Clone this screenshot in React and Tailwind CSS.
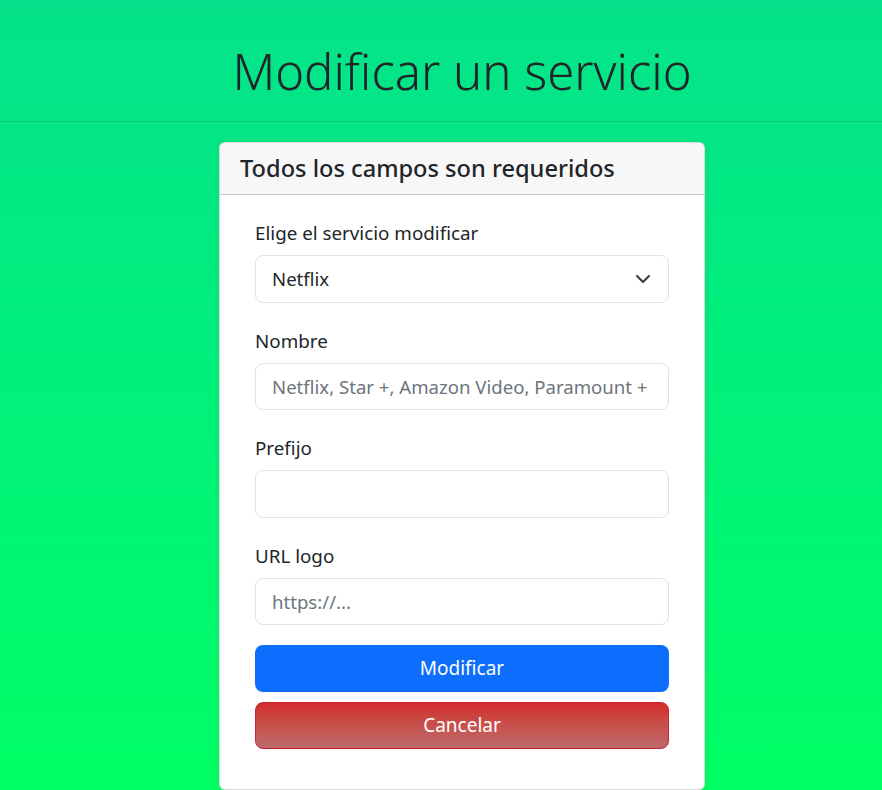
import React from 'react';

const Field = ({ label, children }) => (
    <div className="mb-6">
        <label className="block text-[18.8px] leading-7 mb-2 text-[#212529]">{label}</label>
        {children}
    </div>
);

const inputCls = "block w-full h-[47.5px] px-4 text-[18.6px] text-[#212529] bg-white border border-[#dee2e6] rounded-lg outline-none placeholder:text-[#6c757d]";

const App = () => {
    return (
        <div className="min-h-[790px] bg-gradient-to-b from-[#05e28b] to-[#00ff64] text-[#212529] font-['Noto_Sans',sans-serif]">
            <header className="h-[122px] border-b border-[#0cc778] flex items-center justify-center pl-[42px]">
                <h1 className="text-[49px] font-light leading-none pt-[22px] text-[#212529]">Modificar un servicio</h1>
            </header>

            <div className="flex justify-center pl-[42px] pt-5">
                <div className="w-[486px] bg-white border border-black/15 rounded-md shadow-[0_0_12px_rgba(0,0,0,0.05)] overflow-hidden">
                    <div className="bg-[#f7f7f7] border-b border-black/20 px-5 py-2">
                        <h2 className="text-[23.6px] leading-[35px] font-medium">Todos los campos son requeridos</h2>
                    </div>
                    <form className="px-[35px] pt-[24px] pb-[40px]" onSubmit={e => e.preventDefault()}>
                        <Field label="Elige el servicio modificar">
                            <div className="relative">
                                <select className={inputCls + " appearance-none pr-12"} defaultValue="netflix">
                                    <option value="netflix">Netflix</option>
                                    <option value="star">Star +</option>
                                    <option value="amazon">Amazon Video</option>
                                    <option value="paramount">Paramount +</option>
                                </select>
                                <svg className="absolute right-[18px] top-1/2 -translate-y-1/2 pointer-events-none" width="16" height="16" viewBox="0 0 16 16">
                                    <path fill="none" stroke="#343a40" strokeLinecap="round" strokeLinejoin="round" strokeWidth="2" d="m2 5 6 6 6-6" />
                                </svg>
                            </div>
                        </Field>
                        <Field label="Nombre">
                            <input className={inputCls} placeholder="Netflix, Star +, Amazon Video, Paramount +" />
                        </Field>
                        <Field label="Prefijo">
                            <input className={inputCls} />
                        </Field>
                        <div className="mb-5">
                            <label className="block text-[18.8px] leading-7 mb-2">URL logo</label>
                            <input className={inputCls} placeholder="https://..." />
                        </div>
                        <button type="submit" className="w-full h-[47px] rounded-lg bg-[#0d6efd] text-white text-[19px] mb-[10px]">Modificar</button>
                        <button type="button" className="w-full h-[47px] rounded-lg border border-[#c82333] bg-gradient-to-b from-[#d12a2a] to-[#bd6a6a] text-white text-[19px]">Cancelar</button>
                    </form>
                </div>
            </div>
        </div>
    );
};

export default App;
